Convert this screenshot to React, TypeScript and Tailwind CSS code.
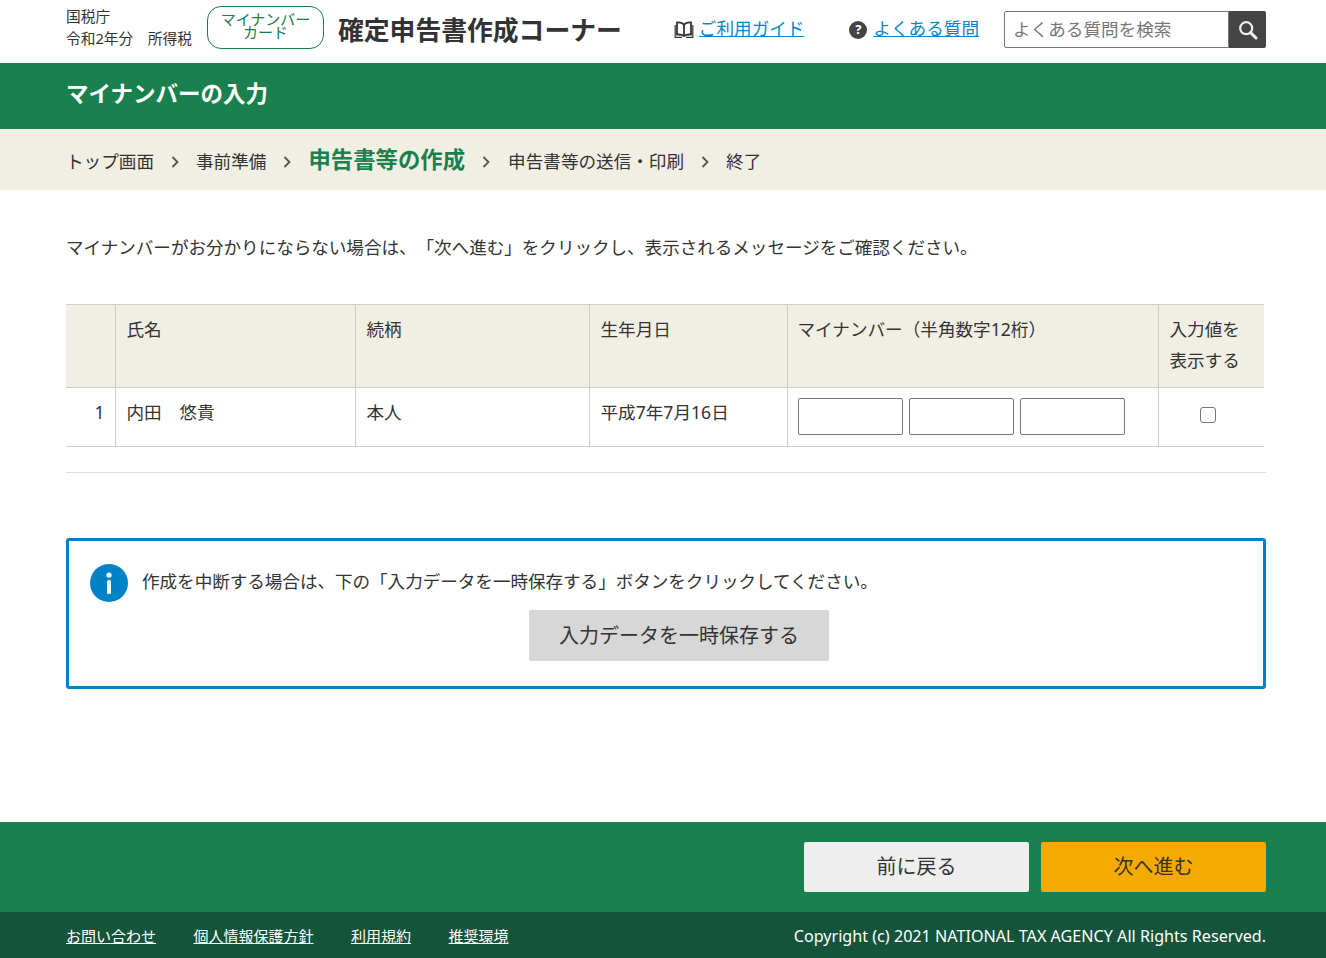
import type { ReactNode } from "react";

const FONT = "font-['Noto_Sans','Noto_Sans_CJK_JP',sans-serif] [text-spacing-trim:space-all]";

function BookIcon() {
  return (
    <svg width="20" height="18" viewBox="0 0 20 18" fill="none" stroke="#333" strokeWidth="1.8">
      <path d="M10 3.5C8.5 2.1 6 1.2 3 1.5V13.6C6 13.3 8.5 13.7 10 15.2C11.5 13.7 14 13.3 17 13.6V1.5C14 1.2 11.5 2.1 10 3.5Z" />
      <path d="M10 3.5V15" />
      <path d="M1.2 4V16.4H8M18.8 4V16.4H12" strokeWidth="1.2" />
    </svg>
  );
}

function SearchIcon() {
  return (
    <svg width="20" height="20" viewBox="0 0 20 20" fill="none" stroke="#eee" strokeWidth="2.2">
      <circle cx="8.2" cy="8.2" r="6" />
      <path d="M12.6 12.6L18 18" strokeWidth="3" strokeLinecap="round" />
    </svg>
  );
}

function TextLink({ children }: { children: ReactNode }) {
  return (
    <a className="text-[17.6px] text-[#0c85c8] underline whitespace-nowrap" href="#">
      {children}
    </a>
  );
}

function Header() {
  return (
    <header className="h-[63px] bg-white pl-[66px] pr-[60px] flex items-center">
      <div className="w-[141px] text-[14.7px] leading-[22px] text-[#333] -mt-[9px]">
        <div>国税庁</div>
        <div className="whitespace-nowrap">令和2年分　所得税</div>
      </div>
      <div className="w-[117px] h-[43px] pb-[2px] border border-[#1a804d] rounded-[14px] flex items-center justify-center text-center text-[15px] leading-[13px] text-[#1a804d] -mt-[9px]">
        マイナンバー
        <br />
        カード
      </div>
      <div className="ml-[14px] -mt-[2px] text-[25.8px] font-bold text-[#333] whitespace-nowrap">
        確定申告書作成コーナー
      </div>
      <div className="ml-auto flex items-center -mt-[4px]">
        <BookIcon />
        <span className="ml-[5px] mb-[2px]">
          <TextLink>ご利用ガイド</TextLink>
        </span>
        <span className="ml-[45px] w-[18px] h-[18px] rounded-full bg-[#444] text-white text-[13px] font-bold flex items-center justify-center leading-none">
          ?
        </span>
        <span className="ml-[6px] mb-[2px]">
          <TextLink>よくある質問</TextLink>
        </span>
        <div className="ml-[25px] w-[225px] h-[37px] pb-[1px] border border-[#777] rounded-l-[2px] flex items-center px-[8px] text-[17.6px] text-[#777] whitespace-nowrap">
          よくある質問を検索
        </div>
        <button className="w-[37px] h-[37px] bg-[#444] rounded-r-[2px] flex items-center justify-center">
          <SearchIcon />
        </button>
      </div>
    </header>
  );
}

function Chevron() {
  return (
    <svg className="mx-[16px] mt-[4px]" width="10" height="14" viewBox="0 0 10 14" fill="none" stroke="#555" strokeWidth="1.8">
      <path d="M2.5 2L7.5 7L2.5 12" />
    </svg>
  );
}

function Breadcrumb() {
  return (
    <nav className="h-[61px] bg-[#f1eee3] px-[66px] flex items-center text-[17.6px] text-[#333] whitespace-nowrap">
      <span className="mt-[4px]">トップ画面</span>
      <Chevron />
      <span className="mt-[4px]">事前準備</span>
      <Chevron />
      <span className="text-[22.4px] font-bold text-[#1a804d]">申告書等の作成</span>
      <Chevron />
      <span className="mt-[4px] ml-[1px]">申告書等の送信・印刷</span>
      <Chevron />
      <span className="mt-[4px]">終了</span>
    </nav>
  );
}

function NumberTable() {
  const th = "border-l border-[#ccc] bg-[#f1eee3] align-top text-left font-normal pl-[11px] pr-[8px] pt-[9px]";
  const td = "border-l border-[#ccc] align-top pl-[11px] pr-[8px] pt-[9px]";
  const input = "w-[105px] h-[37px] border border-[#777] rounded-[2px] bg-white";
  return (
    <table className="w-[1198px] table-fixed border-collapse text-[17.6px] leading-[31px] text-[#333]">
      <colgroup>
        <col className="w-[49px]" />
        <col className="w-[240px]" />
        <col className="w-[234px]" />
        <col className="w-[198px]" />
        <col className="w-[371px]" />
        <col className="w-[106px]" />
      </colgroup>
      <thead>
        <tr className="h-[83px] border-y border-[#ccc]">
          <th className="bg-[#f1eee3]" />
          <th className={th}>氏名</th>
          <th className={th}>続柄</th>
          <th className={th}>生年月日</th>
          <th className={th + " !pl-[10px]"}>マイナンバー（半角数字12桁）</th>
          <th className={th}>
            入力値を
            <br />
            表示する
          </th>
        </tr>
      </thead>
      <tbody>
        <tr className="h-[59px] border-b border-[#ccc]">
          <td className="align-top text-right pr-[10px] pt-[9px]">1</td>
          <td className={td}>内田　悠貴</td>
          <td className={td}>本人</td>
          <td className={td}>平成7年7月16日</td>
          <td className={td + " !pt-0 !pl-[10px]"}>
            <div className="flex gap-[6px] items-center h-[56px]">
              <input className={input} />
              <input className={input} />
              <input className={input} />
            </div>
          </td>
          <td className="border-l border-[#ccc] align-middle text-center">
            <input type="checkbox" className="w-[16px] h-[16px] appearance-none border border-[#777] rounded-[3px] bg-white block mx-auto -translate-x-[3px] -translate-y-[2px]" />
          </td>
        </tr>
      </tbody>
    </table>
  );
}

function SaveNotice() {
  return (
    <section className="mt-[65px] w-[1200px] h-[151px] border-[3px] border-[#0083c6] rounded-[3px] pl-[21px] pt-[23px]">
      <div className="flex items-center h-[38px] text-[17.6px] text-[#333]">
        <svg width="38" height="38" viewBox="0 0 38 38">
          <circle cx="19" cy="19" r="19" fill="#0083c6" />
          <circle cx="19" cy="11" r="2.6" fill="#fff" />
          <rect x="17" y="16" width="4" height="14" rx="1.6" fill="#fff" />
        </svg>
        <span className="ml-[14px] mb-[4px] tracking-[-0.05px]">作成を中断する場合は、下の「入力データを一時保存する」ボタンをクリックしてください。</span>
      </div>
      <div className="mt-[8px] flex pl-[439px]">
        <button className="w-[300px] h-[51px] bg-[#d7d7d7] rounded-[2px] text-[20px] text-[#333]">
          入力データを一時保存する
        </button>
      </div>
    </section>
  );
}

function Footer() {
  const link = "underline whitespace-nowrap";
  return (
    <footer>
      <div className="h-[90px] bg-[#1a804d] px-[60px] flex items-center justify-end gap-[12px] text-[20px] text-[#333]">
        <button className="w-[225px] h-[50px] bg-[#eeeeee] rounded-[2px]">前に戻る</button>
        <button className="w-[225px] h-[50px] bg-[#f5aa00] rounded-[2px]">次へ進む</button>
      </div>
      <div className="h-[46px] bg-[#14543a] pl-[66px] pr-[60px] pt-[3px] flex items-center justify-between text-[15px] text-white">
        <div className="flex gap-[37.5px]">
          <a className={link} href="#">お問い合わせ</a>
          <a className={link} href="#">個人情報保護方針</a>
          <a className={link} href="#">利用規約</a>
          <a className={link} href="#">推奨環境</a>
        </div>
        <div className="whitespace-nowrap text-[16.15px]">Copyright (c) 2021 NATIONAL TAX AGENCY All Rights Reserved.</div>
      </div>
    </footer>
  );
}

export default function App() {
  return (
    <div className={`${FONT} w-[1326px] h-[958px] overflow-hidden flex flex-col bg-white`}>
      <Header />
      <div className="h-[66px] bg-[#1a804d] px-[66px] pb-[4px] flex items-center text-[22.5px] font-bold text-white">
        マイナンバーの入力
      </div>
      <Breadcrumb />
      <main className="flex-1 px-[66px]">
        <p className="mt-[44px] text-[17.6px] leading-[26px] text-[#333] whitespace-nowrap tracking-[-0.05px]">
          マイナンバーがお分かりにならない場合は、「次へ進む」をクリックし、表示されるメッセージをご確認ください。
        </p>
        <div className="mt-[44px]">
          <NumberTable />
        </div>
        <hr className="mt-[25px] w-[1200px] border-[#ddd]" />
        <SaveNotice />
      </main>
      <Footer />
    </div>
  );
}
